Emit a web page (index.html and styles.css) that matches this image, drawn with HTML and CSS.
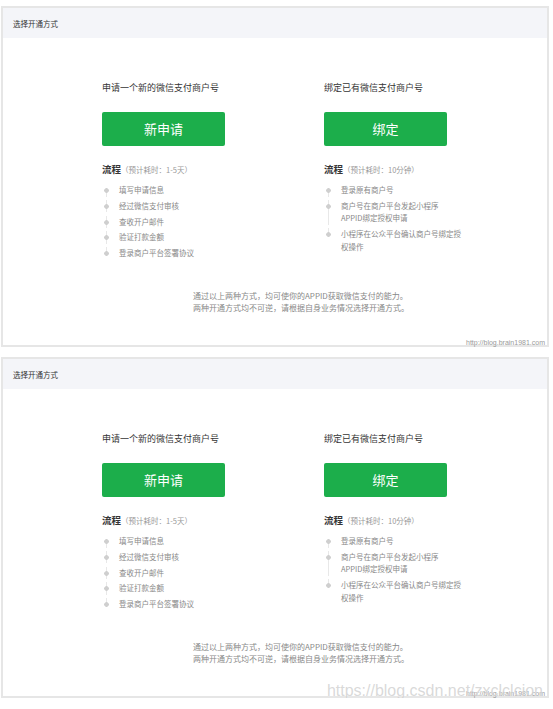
FILE: index.html
```html
<!DOCTYPE html>
<html lang="zh-CN">
<head>
  <meta charset="UTF-8">
  <meta name="viewport" content="width=device-width, initial-scale=1.0">
  <title>选择开通方式</title>
  <link rel="stylesheet" href="styles.css">
</head>
<body>
  <div class="panel">
    <div class="panel-head">选择开通方式</div>
    <div class="panel-body">
      <div class="options">
        <div class="option">
          <p class="option-title">申请一个新的微信支付商户号</p>
          <a class="btn" href="#">新申请</a>
          <p class="flow-title">流程<span class="flow-time">（预计耗时：1-5天）</span></p>
          <ul class="steps">
            <li>填写申请信息</li>
            <li>经过微信支付审核</li>
            <li>查收开户邮件</li>
            <li>验证打款金额</li>
            <li>登录商户平台签署协议</li>
          </ul>
        </div>
        <div class="option">
          <p class="option-title">绑定已有微信支付商户号</p>
          <a class="btn" href="#">绑定</a>
          <p class="flow-title">流程<span class="flow-time">（预计耗时：10分钟）</span></p>
          <ul class="steps">
            <li>登录原有商户号</li>
            <li>商户号在商户平台发起小程序<br>APPID绑定授权申请</li>
            <li>小程序在公众平台确认商户号绑定授<br>权操作</li>
          </ul>
        </div>
      </div>
      <p class="note">通过以上两种方式，均可使你的APPID获取微信支付的能力。<br>两种开通方式均不可逆，请根据自身业务情况选择开通方式。</p>
      <div class="mark">http://blog.brain1981.com</div>
    </div>
  </div>

  <div class="panel">
    <div class="panel-head">选择开通方式</div>
    <div class="panel-body">
      <div class="options">
        <div class="option">
          <p class="option-title">申请一个新的微信支付商户号</p>
          <a class="btn" href="#">新申请</a>
          <p class="flow-title">流程<span class="flow-time">（预计耗时：1-5天）</span></p>
          <ul class="steps">
            <li>填写申请信息</li>
            <li>经过微信支付审核</li>
            <li>查收开户邮件</li>
            <li>验证打款金额</li>
            <li>登录商户平台签署协议</li>
          </ul>
        </div>
        <div class="option">
          <p class="option-title">绑定已有微信支付商户号</p>
          <a class="btn" href="#">绑定</a>
          <p class="flow-title">流程<span class="flow-time">（预计耗时：10分钟）</span></p>
          <ul class="steps">
            <li>登录原有商户号</li>
            <li>商户号在商户平台发起小程序<br>APPID绑定授权申请</li>
            <li>小程序在公众平台确认商户号绑定授<br>权操作</li>
          </ul>
        </div>
      </div>
      <p class="note">通过以上两种方式，均可使你的APPID获取微信支付的能力。<br>两种开通方式均不可逆，请根据自身业务情况选择开通方式。</p>
      <div class="mark">http://blog.brain1981.com</div>
    </div>
    <div class="csdn-mark">https://blog.csdn.net/zxclclcion</div>
  </div>
</body>
</html>
```

FILE: styles.css
```css
body {
  margin: 0;
  padding: 6px 4px 0 1px;
  font-family: "Noto Sans CJK SC", "Liberation Sans", sans-serif;
  background-color: #fff;
}
.panel {
  position: relative;
  width: 548px;
  height: 341px;
  box-sizing: border-box;
  border: 2px solid #e6e6e6;
  display: flex;
  flex-direction: column;
}
.panel + .panel {
  margin-top: 10px;
}
.panel-head {
  height: 30px;
  line-height: 31px;
  padding-left: 10px;
  background-color: #f4f5f9;
  font-size: 7.5px;
  color: #333;
}
.panel-body {
  flex: 1;
  display: flex;
  flex-direction: column;
}
.options {
  display: flex;
  padding: 43px 0 0 99px;
}
.option {
  width: 222px;
}
.option-title {
  margin: 0;
  font-size: 9px;
  line-height: 14px;
  color: #353535;
}
.btn {
  display: block;
  width: 123px;
  height: 34px;
  margin-top: 17px;
  background-color: #1cae4b;
  border-radius: 2px;
  color: white;
  font-size: 13px;
  line-height: 34px;
  text-align: center;
  text-decoration: none;
}
.flow-title {
  margin: 16px 0 0;
  font-size: 9.5px;
  line-height: 14px;
  font-weight: bold;
  color: #353535;
}
.flow-time {
  font-size: 7.5px;
  font-weight: normal;
  color: #999;
}
.steps {
  list-style: none;
  margin: 7px 0 0;
  padding: 0;
}
.steps li {
  display: flex;
  padding-bottom: 3.25px;
  font-size: 7.5px;
  line-height: 12.5px;
  color: #888;
}
.steps li::before {
  content: '';
  flex: none;
  width: 9px;
  margin-right: 8px;
  background-image: radial-gradient(circle, #cfcfcf 2px, transparent 2.6px), linear-gradient(#e8e8e8, #e8e8e8);
  background-size: 9px 9px, 1px 100%;
  background-position: center 2px, center 0;
  background-repeat: no-repeat;
}
.steps li:first-child::before {
  background-position: center 2px, center 6px;
}
.steps li:last-child {
  padding-bottom: 0;
}
.steps li:last-child::before {
  background-size: 9px 9px, 1px 6px;
}
.note {
  margin: 30px 0 0 190px;
  font-size: 8px;
  line-height: 12.7px;
  color: #888;
}
.mark {
  margin-top: auto;
  margin-bottom: -2px;
  padding-right: 2px;
  text-align: right;
  font-family: "Liberation Sans", sans-serif;
  font-size: 7px;
  line-height: 8px;
  color: #999;
}
.csdn-mark {
  position: absolute;
  right: 4px;
  bottom: -3px;
  font-family: "Liberation Sans", sans-serif;
  font-size: 16px;
  line-height: 16px;
  color: rgba(185, 185, 185, 0.55);
  text-shadow: 0 0 1px rgba(255, 255, 255, 0.8);
}
```
